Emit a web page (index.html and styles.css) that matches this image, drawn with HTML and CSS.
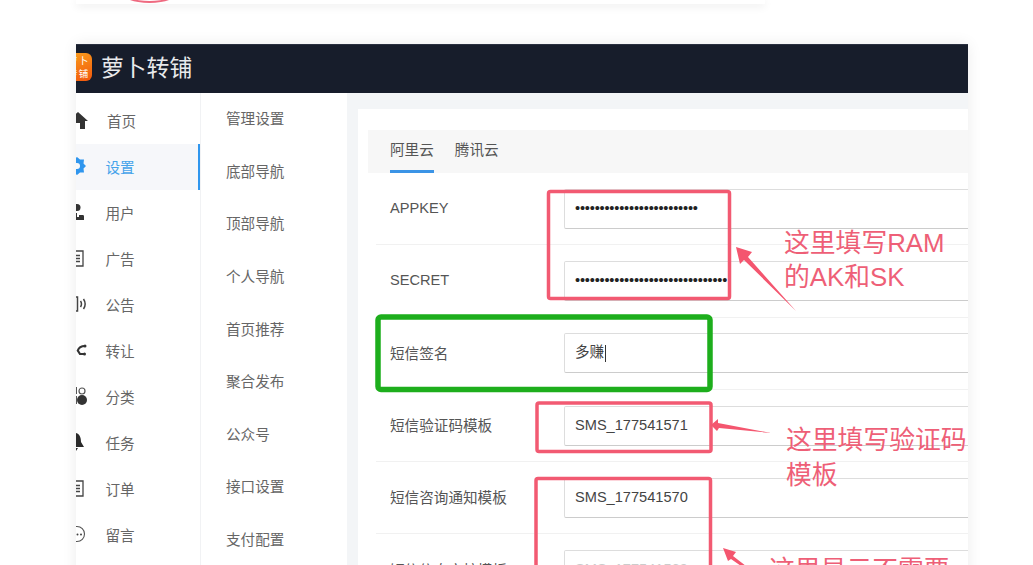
FILE: index.html
```html
<!DOCTYPE HTML>
<html>
<head>
<meta charset="utf-8">
<title>短信设置</title>
<link rel="stylesheet" href="styles.css">
</head>

<body>
<div class="page">
	<div class="prev-card"><div class="prev-ring"></div></div>

	<div class="shot">
		<div class="header">
			<div class="logo"><span>萝</span><span>卜</span><span>转</span><span>铺</span></div>
			<div class="brand">萝卜转铺</div>
		</div>
		<div class="main">
			<ul class="menu">
				<li class="first">
					<svg class="ico" viewBox="0 0 20 20"><path d="M10 2L20 11H17V19H12V13H8V19H3V11H0Z" fill="#333"/></svg>
					<span>首页</span>
				</li>
				<li class="ac">
					<svg class="ico" viewBox="0 0 20 20"><path d="M9 1L12 3.500L16 3.500L15.500 7.500L18 10L15.500 12.500L16 16.500L12 16.500L9 19L6 16.500L2 16.500L2.500 12.500L0 10L2.500 7.500L2 3.500L6 3.500Z" fill="#2f96ee"/><circle cx="9" cy="10" r="3" fill="#f6f8fa"/></svg>
					<span>设置</span>
				</li>
				<li>
					<svg class="ico" viewBox="0 0 20 20"><circle cx="9" cy="5.500" r="3.500" fill="#333"/><path d="M4 18V14C4 12 5 11 7 11H9V15H11V13H15C16 13 16 14 16 15V18Z" fill="#333"/></svg>
					<span>用户</span>
				</li>
				<li>
					<svg class="ico" viewBox="0 0 20 20"><path d="M2 3H15V18H2ZM6 7.500H12M6 10.500H12M6 13.500H12" fill="none" stroke="#444" stroke-width="1.300"/></svg>
					<span>广告</span>
				</li>
				<li>
					<svg class="ico" viewBox="0 0 20 20"><path d="M7 3H9.500V17H7M12.500 7C13.800 9 13.800 11 12.500 13M15.500 5C17.500 8 17.500 12 15.500 15" fill="none" stroke="#444" stroke-width="1.500"/></svg>
					<span>公告</span>
				</li>
				<li>
					<svg class="ico" viewBox="0 0 20 20"><path d="M17 6C14 6 11 7 9.800 10.500L12 14H16" fill="none" stroke="#333" stroke-width="2.200"/><circle cx="17" cy="6" r="1.500" fill="#333"/><circle cx="16.500" cy="14" r="1.500" fill="#333"/></svg>
					<span>转让</span>
				</li>
				<li>
					<svg class="ico" viewBox="0 0 20 20"><circle cx="14" cy="5" r="3" fill="none" stroke="#555" stroke-width="1.200"/><circle cx="14" cy="14" r="5" fill="#333"/><path d="M4 1H9V8H4ZM4 10H9V18H4Z" fill="#555"/></svg>
					<span>分类</span>
				</li>
				<li>
					<svg class="ico" viewBox="0 0 20 20"><path d="M8 1C4 2 3 6 3 10L0 15H16L13 10C13 6 12 2 8 1ZM6 16H10L8 19Z" fill="#2a2a2a"/></svg>
					<span>任务</span>
				</li>
				<li>
					<svg class="ico" viewBox="0 0 20 20"><path d="M2 3H15V18H2ZM6 7.500H12M6 10.500H12M6 13.500H12" fill="none" stroke="#444" stroke-width="1.300"/></svg>
					<span>订单</span>
				</li>
				<li>
					<svg class="ico" viewBox="0 0 20 20"><circle cx="9" cy="10" r="7.500" fill="none" stroke="#555" stroke-width="1.100"/><circle cx="9.500" cy="10.500" r="1" fill="#444"/><circle cx="13" cy="10.500" r="1" fill="#444"/></svg>
					<span>留言</span>
				</li>
			</ul>

			<ul class="submenu">
				<li>管理设置</li>
				<li>底部导航</li>
				<li>顶部导航</li>
				<li>个人导航</li>
				<li>首页推荐</li>
				<li>聚合发布</li>
				<li>公众号</li>
				<li>接口设置</li>
				<li>支付配置</li>
			</ul>

			<div class="content">
				<div class="panel">
					<div class="tabs">
						<a class="tab ac">阿里云</a>
						<a class="tab">腾讯云</a>
					</div>
					<div class="form">
						<div class="row">
							<label>APPKEY</label>
							<div class="field dots">•••••••••••••••••••••••••</div>
						</div>
						<div class="row">
							<label>SECRET</label>
							<div class="field dots">•••••••••••••••••••••••••••••••</div>
						</div>
						<div class="row">
							<label>短信签名</label>
							<div class="field">多赚<i class="caret"></i></div>
						</div>
						<div class="row">
							<label>短信验证码模板</label>
							<div class="field">SMS_177541571</div>
						</div>
						<div class="row">
							<label>短信咨询通知模板</label>
							<div class="field">SMS_177541570</div>
						</div>
						<div class="row">
							<label>短信信息审核模板</label>
							<div class="field pale">SMS_177541569</div>
						</div>
					</div>
				</div>
			</div>
		</div>
	</div>

	<!-- 标注 -->
	<svg class="marks" viewBox="0 0 1033 565">
		<rect class="red" x="548.500" y="191.500" width="181" height="107" rx="2"/>
		<rect class="green" x="378" y="317" width="332" height="72.500" rx="3"/>
		<rect class="red" x="537" y="403" width="174" height="48.500" rx="2"/>
		<rect class="red" x="536" y="478.500" width="174.500" height="110" rx="2"/>
		<polygon class="arrow" points="736,247 752,252 748,257 796,311 744,260 740,264"/>
		<polygon class="arrow" points="711,425 718,419 718,423 771,433 719,428 717,431"/>
		<polygon class="arrow" points="723,548 736,552 733,556 790,600 731,559 728,561"/>
	</svg>
	<div class="note note-ram">这里填写RAM<br>的AK和SK</div>
	<div class="note note-code">这里填写验证码<br>模板</div>
	<div class="note note-skip">这里显示不需要</div>
</div>
</body>
</html>
```

FILE: styles.css
```css
* {margin:0; padding:0; box-sizing:border-box;}
li {list-style:none;}
body {background:#fff; font-family:"Liberation Sans","Noto Sans CJK SC",sans-serif; font-size:14.6px; color:#555;}

.page {position:relative; height:565px; overflow:hidden;}

/* 上一张截图的底边 */
.prev-card {position:relative; width:689px; height:4px; margin-left:76px; background:#fff; box-shadow:0 2px 9px rgba(0,0,0,.1);}
.prev-ring {position:absolute; left:44px; top:-21px; width:59px; height:24px; border:2.500px solid #ef6a80; border-radius:50%;}

.shot {width:892px; height:600px; margin:40px 0 0 76px; overflow:hidden; background:#fff; box-shadow:0 0 14px rgba(0,0,0,.08);}

.header {display:flex; align-items:center; gap:9px; height:49px; padding-bottom:4px; background:#171d2b; border-top:1px solid #2a3040;}
.logo {display:grid; grid-template-columns:11px 11px; justify-content:center; align-items:center; justify-items:center; width:28px; height:28px; margin-left:-12px; border-radius:6px; background:linear-gradient(160deg,#f9a11d,#f2570d); color:#fff; font-size:9.500px; line-height:13px; padding:1px 0;}
.brand {font-size:22.800px; color:#e9eaec; line-height:1; font-family:"Noto Sans CJK SC",sans-serif;}

.main {display:flex; height:507px;}

.menu {flex:none; width:124px; padding-top:5px;}
.menu li {display:flex; align-items:center; gap:17.500px; height:46px; padding-bottom:2px; color:#666;}
.menu li.first span {margin-left:1.500px;}
.menu li.ac {background:#f6f7fa; color:#46a3ea; border-right:2px solid #2f96ee;}
.ico {flex:none; width:20px; height:20px; margin-left:-8px;}

.submenu {flex:none; width:147px; border-left:1px solid #f1f2f4;}
.submenu li {height:52.650px; line-height:52.650px; padding-left:25px; color:#666;}

.content {flex:1; padding:16px 0 0 11px; background:#f3f5f7;}
.panel {height:100%; padding:21px 0 0 10px; background:#fff;}

.tabs {display:flex; gap:21px; height:43px; padding-left:22px; background:#f7f7f7;}
.tab {height:43px; line-height:41px; color:#555;}
.tab.ac {border-bottom:3px solid #3b94e6;}

.form {margin-left:8px;}
.row {display:flex; align-items:center; height:72.300px; padding-left:14px; border-bottom:1px solid #f1f1f1;}
.row label {flex:none; width:174px; margin-bottom:2px; color:#555;}
.field {flex:none; width:500px; height:40px; padding-left:10px; line-height:37px; border:1px solid #ddd; border-bottom-color:#ccc; border-radius:2px; color:#444;}
.dots {letter-spacing:-.2px; white-space:nowrap; overflow:hidden; color:#222;}
.pale {color:#ccc;}
.caret {display:inline-block; width:1px; height:17px; margin-left:1px; vertical-align:middle; background:#333;}

/* 标注 */
.marks {position:absolute; left:0; top:0; width:1033px; height:565px;}
.red {fill:none; stroke:#f25a72; stroke-width:3.500;}
.green {fill:none; stroke:#1dae1c; stroke-width:5.500;}
.arrow {fill:#f4566f;}
.note {position:absolute; font-family:"Liberation Sans","Noto Sans CJK SC",sans-serif; font-size:25.800px; color:#ee5f77; white-space:nowrap;}
.note-ram {left:784px; top:226px; line-height:34px;}
.note-code {left:786px; top:423px; line-height:35px;}
.note-skip {left:769px; top:553px; line-height:35px;}
```
